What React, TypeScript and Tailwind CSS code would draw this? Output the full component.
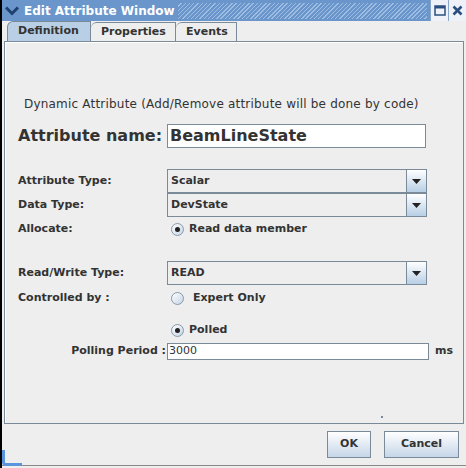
import React from 'react';

const font = "font-['DejaVu_Sans',sans-serif]";

function Combo({ value }: { value: string }) {
  return (
    <div className="flex h-[24px] w-[260px] border border-[#7a8a99] bg-[#eeeeee]">
      <div className="flex flex-1 items-center border-r border-[#7a8a99] pl-[3px] text-[11px] font-bold text-[#333333]">
        {value}
      </div>
      <div className="flex w-[19px] items-center justify-center bg-gradient-to-b from-white to-[#b8cfe5]">
        <svg width="9" height="5" viewBox="0 0 9 5">
          <path d="M0 0h9L4.5 5z" fill="#222" />
        </svg>
      </div>
    </div>
  );
}

function Radio({ checked }: { checked?: boolean }) {
  return (
    <div className="flex h-[13px] w-[13px] items-center justify-center rounded-full border border-[#8a99a8] bg-gradient-to-br from-white to-[#c4d4e6]">
      {checked && <div className="h-[5px] w-[5px] rounded-full bg-[#222]" />}
    </div>
  );
}

function Row({ label, children }: { label: string; children: React.ReactNode }) {
  return (
    <div className="flex items-center">
      <div className="w-[149px] text-[11px] font-bold text-[#333333]">{label}</div>
      {children}
    </div>
  );
}

export default function App() {
  return (
    <div className={`${font} relative flex h-[468px] w-[466px] flex-col border-l-2 border-black bg-[#eeeeee]`}>
      {/* title bar */}
      <div className="flex h-[21px] items-center bg-[#6a96cb]">
        <div className="flex w-[20px] justify-center">
          <svg width="14" height="10" viewBox="0 0 14 10">
            <path d="M1 1.5l6 6 6-6" stroke="#1f3f6e" strokeWidth="3" fill="none" />
          </svg>
        </div>
        <span className="pl-[2px] text-[12px] font-bold text-white">Edit Attribute Window</span>
        <div className="mx-[3px] h-[16px] flex-1 bg-[repeating-linear-gradient(135deg,#6a96cb_0px,#6a96cb_2px,#9dbde2_2px,#9dbde2_3px)]" />
        <div className="flex h-[21px]">
          <div className="flex w-[18px] items-center justify-center border-l border-[#8aa6c8] bg-[#eef2f8]">
            <svg width="12" height="11" viewBox="0 0 12 11">
              <rect x="1" y="1" width="10" height="9" fill="none" stroke="#2a4f7f" strokeWidth="1.5" />
              <rect x="1" y="1" width="10" height="2.5" fill="#2a4f7f" />
            </svg>
          </div>
          <div className="flex w-[18px] items-center justify-center border-l border-[#8aa6c8] bg-[#eef2f8]">
            <svg width="11" height="11" viewBox="0 0 11 11">
              <path d="M1.5 1.5l8 8M9.5 1.5l-8 8" stroke="#2a4f7f" strokeWidth="2.6" />
            </svg>
          </div>
        </div>
      </div>

      {/* tabs */}
      <div className="flex h-[20px] items-end pl-[5px] pt-[1px]">
        <div className="flex h-[20px] w-[84px] items-center rounded-tl-[6px] border border-b-0 border-[#7a8a99] bg-[#b8cfe5] pl-[10px] text-[11px] font-bold text-[#333]">
          Definition
        </div>
        <div className="flex h-[19px] w-[85px] items-center rounded-tl-[6px] border border-b-0 border-l-0 border-[#7a8a99] bg-[#eeeeee] pl-[10px] text-[11px] font-bold text-[#333]">
          Properties
        </div>
        <div className="flex h-[19px] w-[61px] items-center rounded-tl-[6px] border border-b-0 border-l-0 border-[#7a8a99] bg-[#eeeeee] pl-[10px] text-[11px] font-bold text-[#333]">
          Events
        </div>
      </div>

      {/* panel */}
      <div className="relative mx-[2px] h-[383px] border border-[#7a8a99] shadow-[inset_1px_1px_0_#ffffff]">
        <div className="flex flex-col pl-[13px]">
          <div className="mt-[53px] pl-[6px] text-[12px] tracking-[0.2px] text-[#333]">
            Dynamic Attribute (Add/Remove attribute will be done by code)
          </div>
          <div className="mt-[11px] flex items-center">
            <div className="w-[149px] text-[16px] font-bold text-[#333]">Attribute name:</div>
            <div className="flex h-[24px] w-[259px] items-center border border-[#7a8a99] bg-white pl-[2px] text-[16px] font-bold text-[#333]">
              BeamLineState
            </div>
          </div>

          <div className="mt-[21px] flex flex-col">
            <Row label="Attribute Type:">
              <Combo value="Scalar" />
            </Row>
            <Row label="Data Type:">
              <Combo value="DevState" />
            </Row>
            <Row label="Allocate:">
              <div className="flex h-[24px] items-center gap-[5px] pl-[4px]">
                <Radio checked />
                <span className="text-[11px] font-bold text-[#333]">Read data member</span>
              </div>
            </Row>
          </div>

          <div className="mt-[20px] flex flex-col">
            <Row label="Read/Write Type:">
              <Combo value="READ" />
            </Row>
            <Row label="Controlled by :">
              <div className="flex h-[26px] items-center gap-[9px] pl-[4px]">
                <Radio />
                <span className="text-[11px] font-bold text-[#333]">Expert Only</span>
              </div>
            </Row>
            <Row label="">
              <div className="mt-[6px] flex h-[26px] items-center gap-[5px] pl-[4px]">
                <Radio checked />
                <span className="text-[11px] font-bold text-[#333]">Polled</span>
              </div>
            </Row>
            <div className="flex items-center">
              <div className="w-[149px] whitespace-nowrap pr-[1px] text-right text-[11px] font-bold text-[#333]">
                Polling Period :
              </div>
              <div className="flex h-[17px] w-[262px] items-center border border-[#7a8a99] bg-white pl-[1px] text-[11px] text-[#333]">
                3000
              </div>
              <span className="pl-[6px] text-[11px] font-bold text-[#333]">ms</span>
            </div>
          </div>
        </div>
        <div className="absolute left-[376px] top-[374px] h-[2px] w-[2px] bg-[#7a8a99]" />
      </div>

      {/* buttons */}
      <div className="mt-[7px] flex justify-end gap-[13px] pr-[7px]">
        <button className="h-[27px] w-[44px] border border-[#7a8a99] bg-gradient-to-b from-white to-[#c6d6e8] text-[11px] font-bold text-[#333]">
          OK
        </button>
        <button className="h-[27px] w-[75px] border border-[#7a8a99] bg-gradient-to-b from-white to-[#c6d6e8] text-[11px] font-bold text-[#333]">
          Cancel
        </button>
      </div>

      <div className="absolute bottom-[2px] left-0 right-0 h-px bg-[#8a8a8a]" />
      <div className="absolute bottom-[2px] left-0 h-[16px] w-[20px] rounded-bl-[4px] border-b-[3px] border-l-[3px] border-[#5a94dc]" />
    </div>
  );
}
